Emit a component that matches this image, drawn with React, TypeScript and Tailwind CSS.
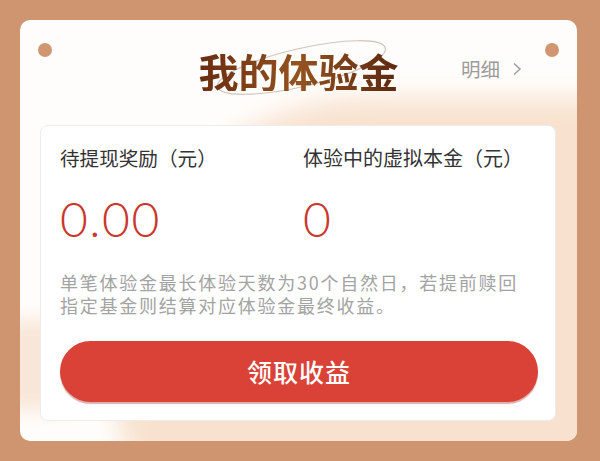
export default function App() {
  return (
    <div
      className="w-[600px] h-[461px] bg-[#cf9570] pt-[20px] pl-[20px] pr-[23px] pb-[20px]"
      style={{ fontFamily: '"Noto Sans CJK SC", "Noto Sans", sans-serif' }}
    >
      <div className="relative h-[421px] rounded-[10px] bg-[#fffdfb] overflow-hidden">
        {/* soft peach glow behind the panel */}
        <div className="absolute left-[90px] top-[78px] w-[820px] h-[520px] rounded-full bg-[#f8e2cf] blur-[12px]" />
        <div className="absolute left-[-60px] top-[300px] w-[140px] h-[90px] rounded-full bg-[#f8e6d8] blur-[10px]" />

        <div className="relative grid grid-cols-[1fr_auto_1fr] h-[105px] px-[18px]">
          <div className="mt-[23px] w-[14px] h-[14px] rounded-full bg-[#d09671]" />

          <div className="relative pt-[31px]">
            <svg
              className="absolute left-[-20px] top-[11px] w-[240px] h-[90px] overflow-visible"
              viewBox="0 0 240 90"
            >
              <ellipse
                cx="122.5"
                cy="36.5"
                rx="86"
                ry="19"
                fill="none"
                stroke="#cfc4bc"
                strokeWidth="1.2"
                transform="rotate(-13 122.5 36.5)"
              />
            </svg>
            <h1 className="relative text-[40px] leading-[40px] font-bold bg-gradient-to-r from-[#6a2c12] via-[#94531f] to-[#5c2811] bg-clip-text text-transparent">
              我的体验金
            </h1>
          </div>

          <div className="flex justify-end items-start">
            <div className="mt-[39px] flex items-center text-[19.5px] leading-[20px] text-[#9a9a9a]">
              <span>明细</span>
              <svg className="ml-[12px]" width="10" height="14" viewBox="0 0 10 14">
                <polyline points="2,1.5 8,7 2,12.5" fill="none" stroke="#a0a0a0" strokeWidth="1.6" />
              </svg>
            </div>
            <div className="mt-[23px] ml-[23px] w-[14px] h-[14px] rounded-full bg-[#d09671]" />
          </div>
        </div>

        <div className="relative ml-[20px] mr-[21px] h-[296px] rounded-[8px] border border-[#ececec] bg-white">
          <div className="grid grid-cols-[243px_1fr] pl-[19px] pt-[22px]">
            <div>
              <p className="text-[19.6px] leading-[20px] text-[#333]">待提现奖励（元）</p>
              <p
                className="mt-[26px] text-[48px] leading-[50px] font-light text-[#c9372d] tracking-[1.5px]"
                style={{ fontFamily: 'Lato, Roboto, sans-serif' }}
              >
                0.00
              </p>
            </div>
            <div>
              <p className="text-[20px] leading-[20px] text-[#333]">体验中的虚拟本金（元）</p>
              <p
                className="mt-[26px] text-[48px] leading-[50px] font-light text-[#c9372d]"
                style={{ fontFamily: 'Lato, Roboto, sans-serif' }}
              >
                0
              </p>
            </div>
          </div>

          <p className="mt-[27px] pl-[19px] text-[18px] leading-[22.5px] tracking-[1.75px] text-[#a3a3a3] whitespace-nowrap">
            单笔体验金最长体验天数为30个自然日，若提前赎回
            <br />
            指定基金则结算对应体验金最终收益。
          </p>

          <button className="mt-[25px] ml-[19px] w-[478px] h-[61px] rounded-full bg-[#da4237] shadow-[0_2px_1px_rgba(150,30,20,0.35)] text-white text-[25px] font-medium tracking-[1px]">
            领取收益
          </button>
        </div>
      </div>
    </div>
  );
}
